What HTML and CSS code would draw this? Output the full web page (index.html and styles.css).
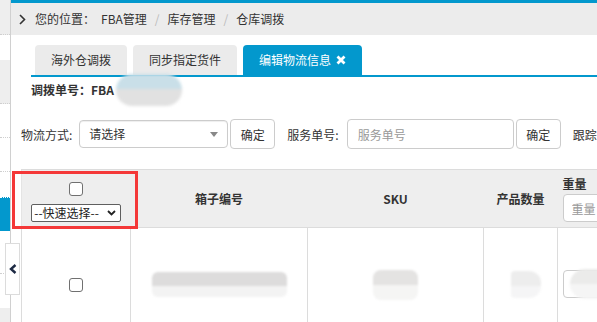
FILE: index.html
```html
<!DOCTYPE html>
<html lang="zh-CN">
<head>
<meta charset="utf-8">
<title>编辑物流信息</title>
<link rel="stylesheet" href="styles.css">
</head>
<body>
<div class="layout">
  <!-- left menu, mostly hidden -->
  <aside class="sidebar">
    <div class="nav-item gray h35 dotted"></div>
    <div class="nav-item h26"></div>
    <div class="nav-item gray h44 dotted"></div>
    <div class="nav-item h34 dotted"></div>
    <div class="nav-item h34 dotted"></div>
    <div class="nav-item h26"></div>
    <div class="nav-item active h34"></div>
    <div class="nav-item h43 dotted"></div>
    <div class="nav-item h35"></div>
    <div class="nav-item gray h20"></div>
  </aside>
  <button class="collapse" type="button">
    <svg width="8" height="10" viewBox="0 0 8 10"><path d="M6.5 1 L2 5 L6.5 9" fill="none" stroke="#1d2a44" stroke-width="2.4"/></svg>
  </button>

  <div class="main">
    <div class="topline"></div>
    <div class="crumb">
      <svg class="crumb-arrow" width="7" height="11" viewBox="0 0 7 11"><path d="M1 1 L5.5 5.5 L1 10" fill="none" stroke="#333" stroke-width="1.6"/></svg>
      <span>您的位置：</span>
      <span class="crumb-link">FBA管理</span>
      <span class="sep">/</span>
      <span>库存管理</span>
      <span class="sep">/</span>
      <span>仓库调拨</span>
    </div>

    <div class="tabs">
      <div class="tab">海外仓调拨</div>
      <div class="tab">同步指定货件</div>
      <div class="tab active">编辑物流信息
        <svg class="tab-close" width="10" height="10" viewBox="0 0 10 10"><path d="M1.5 1.5 L8.5 8.5 M8.5 1.5 L1.5 8.5" stroke="#fff" stroke-width="2.8"/></svg>
      </div>
    </div>

    <div class="order-no">调拨单号：FBA<span class="blur-id"></span></div>

    <div class="filter">
      <label>物流方式:</label>
      <div class="select-box">
        <span>请选择</span>
        <i class="caret"></i>
      </div>
      <button class="btn" type="button">确定</button>
      <label class="ml">服务单号:</label>
      <input class="text-input" type="text" placeholder="服务单号">
      <button class="btn" type="button">确定</button>
      <label class="ml">跟踪号:</label>
    </div>

    <table class="grid">
      <colgroup>
        <col class="c1"><col class="c2"><col class="c3"><col class="c4"><col class="c5">
      </colgroup>
      <thead>
        <tr class="head-row">
          <th class="th-check">
            <input type="checkbox" class="chk">
            <div class="quick">
              <select><option>--快速选择--</option></select>
              <svg width="9" height="6" viewBox="0 0 9 6"><path d="M1 1 L4.5 4.5 L8 1" fill="none" stroke="#222" stroke-width="1.8"/></svg>
            </div>
          </th>
          <th>箱子编号</th>
          <th>SKU</th>
          <th>产品数量</th>
          <th class="th-weight">
            <div class="wlabel">重量</div>
            <input class="text-input w-input" type="text" placeholder="重量">
          </th>
        </tr>
      </thead>
      <tbody>
        <tr class="body-row">
          <td><input type="checkbox" class="chk"></td>
          <td><span class="blob b-box"></span></td>
          <td><span class="blob b-sku"></span></td>
          <td><span class="blob b-qty"></span></td>
          <td class="td-weight"><div class="w-cell"><span class="blob b-w"></span></div></td>
        </tr>
      </tbody>
    </table>
  </div>

  <div class="highlight"></div>
</div>
</body>
</html>
```

FILE: styles.css
```css
html, body {
  margin: 0;
  padding: 0;
}
body {
  font-family: "Noto Sans CJK SC", "Liberation Sans", sans-serif;
  font-size: 12px;
  color: #333;
  background: #fff;
  width: 597px;
  height: 322px;
  overflow: hidden;
}

.layout {
  position: relative;
  display: flex;
  height: 322px;
}

/* sidebar */
.sidebar {
  width: 10px;
  flex: none;
  border-right: 1px solid #d0d0d0;
  display: flex;
  flex-direction: column;
}
.nav-item { background: #fff; flex: none; }
.nav-item.gray { background: #eeeeee; }
.nav-item.active { background: #0398cd; border-top: 1px dotted #fff; }
.nav-item.dotted { border-bottom: 1px dotted #cfcfcf; }
.h20 { height: 20px; }
.h26 { height: 25px; }
.h34 { height: 33px; }
.h35 { height: 34px; }
.h43 { height: 42px; }
.h44 { height: 43px; }

.collapse {
  position: absolute;
  left: 5px;
  top: 243px;
  width: 15px;
  height: 52px;
  padding: 0;
  margin: 0;
  background: #fff;
  border: 1px solid #dcdcdc;
  display: flex;
  align-items: center;
  justify-content: center;
}

/* main */
.main {
  flex: 1;
  min-width: 0;
  overflow: hidden;
}
.topline {
  height: 3px;
  background: #0398cd;
}
.crumb {
  height: 32px;
  background: #ececec;
  display: flex;
  align-items: center;
  padding-left: 8px;
  line-height: 16px;
  white-space: nowrap;
}
.crumb-arrow { margin-right: 9px; }
.crumb-link { margin-left: 6px; }
.sep {
  color: #bbb;
  margin: 0 8px;
}

.tabs {
  display: flex;
  gap: 6px;
  margin: 10px 0 0 20px;
  padding-left: 4px;
  border-bottom: 2px solid #0398cd;
}
.tab {
  height: 30px;
  line-height: 30px;
  padding: 0 16px;
  background: #ebebeb;
  border-radius: 4px 4px 0 0;
  white-space: nowrap;
}
.tab.active {
  background: #0398cd;
  color: #fff;
  display: flex;
  align-items: center;
  gap: 5px;
}

.order-no {
  padding-left: 20px;
  height: 26px;
  line-height: 26px;
  font-weight: bold;
  white-space: nowrap;
}
.blur-id {
  display: inline-block;
  vertical-align: middle;
  width: 66px;
  height: 32px;
  margin: -10px 0 -6px 2px;
  border-radius: 16px;
  background: linear-gradient(#c9dfe8 48%, #e1e1e1 48%);
  filter: blur(1.5px);
}

.filter {
  margin-top: 16px;
  padding-left: 10px;
  display: flex;
  align-items: center;
  height: 30px;
  white-space: nowrap;
}
.filter > * { flex: none; }
.filter label { margin-right: 7px; }
.filter .ml { margin-left: 12px; margin-right: 8px; }
.select-box {
  position: relative;
  width: 149px;
  height: 28px;
  line-height: 26px;
  padding-left: 9px;
  box-sizing: border-box;
  border: 1px solid #ccc;
  border-radius: 4px;
  box-shadow: inset 0 1px 1px rgba(0,0,0,.07);
  margin-right: 2px;
}
.caret {
  position: absolute;
  right: 9px;
  top: 11px;
  border-left: 4px solid transparent;
  border-right: 4px solid transparent;
  border-top: 5px solid #888;
}
.btn {
  width: 45px;
  height: 30px;
  padding: 0;
  background: #fff;
  border: 1px solid #ccc;
  border-radius: 4px;
  font: inherit;
  color: #333;
}
.text-input {
  box-sizing: border-box;
  height: 30px;
  border: 1px solid #ccc;
  border-radius: 4px;
  padding: 0 10px;
  font: inherit;
  color: #333;
  outline: none;
}
.text-input::placeholder { color: #999; }
.filter .text-input {
  width: 167px;
  margin-right: 2px;
}

/* table */
.grid {
  margin: 20px 0 0 10px;
  border-collapse: collapse;
  table-layout: fixed;
  width: 640px;
}
.c1 { width: 109px; }
.c2 { width: 177px; }
.c3 { width: 176px; }
.c4 { width: 74px; }
.c5 { width: 104px; }

.head-row { height: 58px; }
.grid th {
  background: #eeeeee;
  padding: 0;
  border-top: 1px solid #dcdcdc;
  border-bottom: 1px solid #dcdcdc;
  font-weight: bold;
  text-align: center;
  vertical-align: middle;
  line-height: 16px;
}
.grid th.th-check {
  vertical-align: top;
  padding-top: 12px;
  border-left: 1px solid #e4e4e4;
}
.grid th.th-weight {
  text-align: left;
  vertical-align: top;
  padding: 6px 0 0 5px;
}
.wlabel { margin-bottom: 2px; }
.w-input {
  display: block;
  width: 60px;
  height: 28px;
  padding: 0 8px;
  font-weight: normal;
}

.chk {
  appearance: none;
  -webkit-appearance: none;
  display: block;
  margin: 0 auto;
  width: 14px;
  height: 14px;
  border: 1px solid #707070;
  border-radius: 3px;
  background: #fff;
  box-sizing: border-box;
}
.quick {
  position: relative;
  width: 90px;
  margin: 8px auto 0;
}
.quick select {
  appearance: none;
  -webkit-appearance: none;
  display: block;
  width: 90px;
  height: 18px;
  box-sizing: border-box;
  border: 1px solid #5f5f5f;
  border-radius: 2px;
  background: #fff;
  font: inherit;
  font-weight: normal;
  color: #222;
  padding: 0 0 0 2px;
  line-height: 16px;
}
.quick svg {
  position: absolute;
  right: 5px;
  top: 6px;
}

.body-row { height: 114px; }
.grid td {
  padding: 0;
  border: 1px solid #dcdcdc;
  border-bottom: none;
  text-align: center;
  vertical-align: middle;
}
.grid td.td-weight {
  text-align: left;
  padding-left: 5px;
}
.w-cell {
  width: 60px;
  height: 28px;
  border: 1px solid #ccc;
  border-radius: 4px;
  margin-top: -1px;
  display: flex;
  align-items: center;
  padding-left: 6px;
  box-sizing: border-box;
}

.blob {
  display: inline-block;
  vertical-align: middle;
  border-radius: 6px;
  filter: blur(1.2px);
}
.b-box {
  width: 135px;
  height: 25px;
  background: linear-gradient(#dddcdc 58%, #f3f3f3 58%);
}
.b-sku {
  width: 45px;
  height: 30px;
  background: linear-gradient(#e4e3e2 50%, #f5f5f4 50%);
  border-radius: 8px;
}
.b-qty {
  width: 30px;
  height: 27px;
  margin-left: 10px;
  background: linear-gradient(#ededed 55%, #f5f5f6 55%);
  border-radius: 4px 12px 12px 4px;
}
.b-w {
  width: 50px;
  height: 30px;
  border-radius: 15px;
  background: linear-gradient(#ebebea 50%, #f5f5f5 50%);
}

/* red annotation box around the select column header */
.highlight {
  position: absolute;
  left: 12px;
  top: 171px;
  width: 120px;
  height: 52px;
  border: 3px solid #f43838;
}
```
